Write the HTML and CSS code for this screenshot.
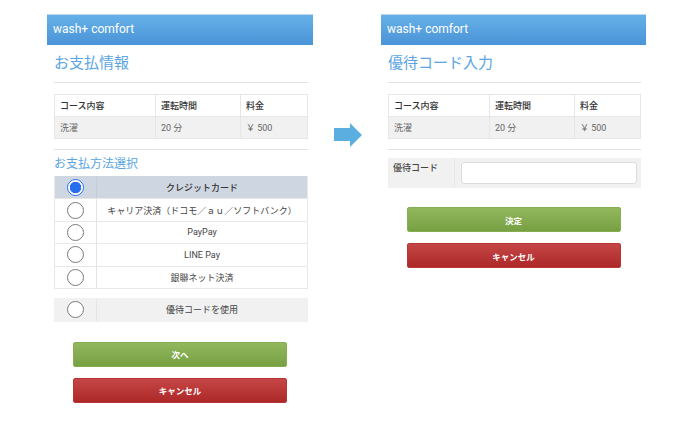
FILE: index.html
```html
<!DOCTYPE html>
<html lang="ja">
<head>
<meta charset="utf-8">
<link rel="stylesheet" href="styles.css">
</head>
<body>
<div class="stage">
  <section class="panel">
    <header class="bar">wash+ comfort</header>
    <div class="body">
      <h1 class="title">お支払情報</h1>
      <hr class="rule">
      <table class="info">
        <tr class="head"><td class="c1">コース内容</td><td class="c2">運転時間</td><td class="c3">料金</td></tr>
        <tr class="data"><td>洗濯</td><td>20 分</td><td>￥ 500</td></tr>
      </table>
      <hr class="rule rule2">
      <h2 class="sub">お支払方法選択</h2>
      <div class="opts">
        <div class="opt sel"><span class="rad"><i class="radio on"></i></span><span class="lbl b">クレジットカード</span></div>
        <div class="opt"><span class="rad"><i class="radio"></i></span><span class="lbl">キャリア決済（ドコモ／ａｕ／ソフトバンク）</span></div>
        <div class="opt"><span class="rad"><i class="radio"></i></span><span class="lbl">PayPay</span></div>
        <div class="opt"><span class="rad"><i class="radio"></i></span><span class="lbl">LINE Pay</span></div>
        <div class="opt"><span class="rad"><i class="radio"></i></span><span class="lbl">銀聯ネット決済</span></div>
      </div>
      <div class="opts single">
        <div class="opt grey"><span class="rad"><i class="radio"></i></span><span class="lbl">優待コードを使用</span></div>
      </div>
      <div class="btns">
        <button class="btn green">次へ</button>
        <button class="btn red">キャンセル</button>
      </div>
    </div>
  </section>

  <div class="gap">
    <svg class="arrow" width="28" height="24" viewBox="0 0 28 24"><path d="M0 5 H16 V0 L28 12 L16 24 V18 H0 Z" fill="#5aaee0"/></svg>
  </div>

  <section class="panel p2">
    <header class="bar">wash+ comfort</header>
    <div class="body">
      <h1 class="title">優待コード入力</h1>
      <hr class="rule">
      <table class="info">
        <tr class="head"><td class="c1">コース内容</td><td class="c2">運転時間</td><td class="c3">料金</td></tr>
        <tr class="data"><td>洗濯</td><td>20 分</td><td>￥ 500</td></tr>
      </table>
      <hr class="rule rule2">
      <div class="code">
        <span class="code-l">優待コード</span>
        <span class="code-r"><span class="input"></span></span>
      </div>
      <div class="btns b2">
        <button class="btn green">決定</button>
        <button class="btn red">キャンセル</button>
      </div>
    </div>
  </section>
</div>
</body>
</html>
```
FILE: styles.css
```css
* { box-sizing: border-box; }
html, body { margin: 0; padding: 0; background: #fff; }
body {
  font-family: Roboto, "Noto Sans CJK JP", "Noto Sans", sans-serif;
  color: #333;
  width: 686px; height: 421px; overflow: hidden;
}
.stage { display: flex; padding: 14px 0 0 47px; }
.panel { width: 266px; }
.p2 { width: 265px; }
.gap { width: 68px; position: relative; }
.arrow { position: absolute; left: 21px; top: 109px; }
.bar {
  height: 31px;
  background: linear-gradient(#66b0e8, #4a94d8);
  border-top: 1px solid #bcd6ee;
  color: #fff;
  font-size: 12px;
  line-height: 29px;
  padding-left: 6px;
}
.body { padding: 0 5px 0 7px; }
.title {
  margin: 0; font-weight: normal;
  font-size: 15px; color: #5aa5e2;
  padding-top: 8px; height: 37px; line-height: 20px;
}
.rule { border: 0; border-top: 1px solid #e2e2e2; margin: 0; }
.info {
  width: 100%; border-collapse: collapse; margin-top: 11px;
  font-size: 9px;
}
.info td { border: 1px solid #e6e6e6; height: 22px; padding: 0 5px; }
.info .c1 { width: 101px; }
.info .c2 { width: 85px; }
.head td { background: #fff; color: #333; font-weight: 500; }
.data td { background: #f1f1f1; color: #666; }
.rule2 { margin-top: 10px; }
.sub {
  margin: 0; font-weight: normal; font-size: 12px; color: #5aa5e2;
  padding-top: 6px; height: 26px; line-height: 16px;
}
.opts { border: 1px solid #e8e8e8; border-top: 0; }
.opt { display: flex; height: 22.4px; border-top: 1px solid #e8e8e8; background: #fff; }
.opt.sel { background: #ced6e1; border-top-color: #ced6e1; }
.opt.grey { background: #f1f1f1; }
.single { margin-top: 9px; border-color: #f1f1f1; }
.single .opt { border-top-color: #f1f1f1; height: 23px; }
.rad { width: 42px; border-right: 1px solid #e4e4e4; display: flex; align-items: center; justify-content: center; }
.sel .rad { border-right-color: #c4ccd8; }
.radio {
  width: 17px; height: 17px; border-radius: 50%;
  border: 1px solid #7a7a7a; background: #fff; display: block;
}
.radio.on {
  border: 1.5px solid #2a6ef0;
  background: radial-gradient(circle, #2a6ef0 0 5.5px, #fff 6px);
}
.lbl { flex: 1; display: flex; align-items: center; justify-content: center; font-size: 9px; color: #444; }
.lbl.b { font-weight: 500; color: #333; }
.btns { display: flex; flex-direction: column; align-items: center; gap: 11px; padding-top: 20px; margin-right: 2px; }
.btn {
  width: 214px; height: 25px; border-radius: 2px;
  font-family: inherit; font-size: 8.5px; font-weight: bold; color: #fff;
  padding: 0; cursor: pointer;
}
.green { background: linear-gradient(#92b75d, #77a043); border: 1px solid #86ad50; }
.red { background: linear-gradient(#c54646, #ad2828); border: 1px solid #b83535; }
.code { display: flex; height: 30px; background: #f1f1f1; margin-top: 8px; }
.code-l { width: 67px; font-size: 9px; font-weight: 500; color: #444; padding: 3px 0 0 5px; border-right: 1px solid #e8e8e8; }
.code-r { flex: 1; padding: 4px 4px 4px 6px; }
.input { display: block; height: 22px; background: #fff; border: 1px solid #dcdcdc; border-radius: 3px; }
.b2 { padding-top: 19px; }
```
